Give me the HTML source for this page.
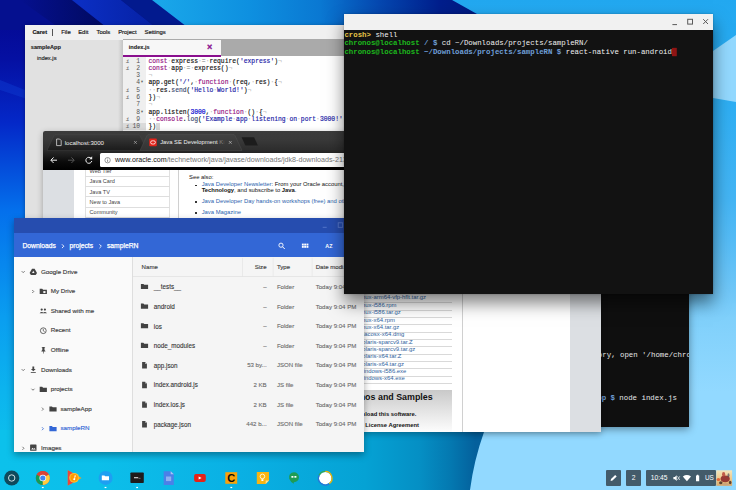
<!DOCTYPE html>
<html lang="en">
<head>
<meta charset="utf-8">
<title>Chrome OS desktop</title>
<style>
*{box-sizing:border-box;margin:0;padding:0}
html,body{width:736px;height:490px;overflow:hidden;background:#0a8fe0;font-family:"Liberation Sans",sans-serif;}
#desk{position:absolute;left:0;top:0;width:736px;height:490px;overflow:hidden}
.abs{position:absolute}
.win{position:absolute;overflow:hidden}
.t{position:absolute;white-space:pre;line-height:1}
/* ---------- Caret ---------- */
#caret{left:24.5px;top:24.5px;width:330px;height:200px;background:#fff;box-shadow:0 1px 4px rgba(0,0,0,.35)}
#caret .menu{position:absolute;left:0;top:0;width:100%;height:15px;background:#f1f1f1}
#caret .menu span{position:absolute;top:5.5px;font-size:5.9px;color:#1a1a1a;line-height:1;-webkit-text-stroke:0.18px #1a1a1a}
#caret .side{position:absolute;left:0;top:15.5px;width:98px;height:190px;background:linear-gradient(90deg,#e1e1e1 0,#e1e1e1 93px,#c4c4c4 98px)}
#caret .tabbar{position:absolute;left:98px;top:14.4px;width:240px;height:17.6px;background:#aaa}
#caret .tab{position:absolute;left:0;top:1.1px;width:98px;height:16.5px;background:#f7f7f7}
#caret .pline{position:absolute;left:98px;top:30.3px;width:98px;height:1.8px;background:#8a0f8e}
#caret .gutter{position:absolute;left:98px;top:32.1px;width:23px;height:170px;background:#efefef}
#caret .code{position:absolute;left:98px;top:33px;-webkit-text-stroke:0.15px;font-family:"Liberation Mono",monospace;font-size:6.35px;line-height:7.3px;color:#111}
#caret .code div{height:7.3px;position:relative}
#caret .ln{position:absolute;left:0;width:17.5px;text-align:right;color:#555;-webkit-text-stroke:0}
#caret .inf{position:absolute;left:3.5px;color:#777;font-style:italic;font-size:5.5px}
#caret .fold{position:absolute;left:18px;color:#555;font-size:5px}
#caret .src{position:absolute;left:26px;white-space:pre}
.o{color:#777}.k{color:#930f80}.s{color:#1a1aa6}.f{color:#3c4c72}.n{color:#0000cd}.i{color:#bfbfbf}.c{color:#930f80}
/* ---------- Terminal front ---------- */
#term{left:344px;top:14.2px;width:369.2px;height:279.8px;background:#121212;box-shadow:0 9px 16px rgba(0,0,0,.5),0 0 2px rgba(0,0,0,.25)}
#term .title{position:absolute;left:0;top:0;width:100%;height:16.2px;background:#f1f1f1}
.mono{font-family:"Liberation Mono",monospace;font-size:7.38px;line-height:8.6px;white-space:pre;color:#f0f0f0}
.g{color:#1cb81c;font-weight:bold}.y{color:#e8c547;font-weight:bold}.b{color:#6f9fd8;font-weight:bold}
/* ---------- Terminal back ---------- */
#term2{left:470px;top:250px;width:219px;height:176.5px;background:#0f0f0f;box-shadow:0 2px 8px rgba(0,0,0,.4)}
/* ---------- Chrome ---------- */
#chrome{left:43px;top:131px;width:557.5px;height:301px;background:#fff;border-radius:2px 2px 0 0;box-shadow:0 2px 6px rgba(0,0,0,.3)}
#chrome .frame{position:absolute;left:0;top:0;width:100%;height:19.5px;background:linear-gradient(#3c3c3c,#3a3a3a 40%,#2c2c2c)}
#chrome .tool{position:absolute;left:0;top:19.2px;width:100%;height:19.5px;background:linear-gradient(#2b2b2b,#0a0a0a 60%,#000)}
#chrome .omni{position:absolute;left:57.2px;top:22.2px;width:520px;height:14.3px;background:#fff;border-radius:1.5px}
#chrome .page{overflow:hidden;position:absolute;left:0;top:38.5px;width:557.5px;height:263px;background:#fff;font-size:5.85px;color:#111}
.lnk{color:#2b5fae}
/* ---------- Files ---------- */
#files{left:14.3px;top:217.7px;width:349.7px;height:234.5px;background:#f5f5f5;box-shadow:0 3px 7px rgba(0,0,0,.35)}
#files .tb{position:absolute;left:0;top:0;width:100%;height:16px;background:#264daf}
#files .bar{position:absolute;left:0;top:15.5px;width:100%;height:24.3px;background:#3367d6}
#files .side{position:absolute;left:0;top:39.8px;width:118.8px;height:195px;background:#fafafa;border-right:0.6px solid #dedede}
#files .t{font-size:6.45px;color:#444}
/* ---------- Shelf ---------- */
.tray{position:absolute;top:470.4px;height:15.3px;background:#435b6a;border-radius:1px}
</style>
</head>
<body>
<div id="desk">
<!--WALL-->
<svg class="abs" style="left:0;top:0" width="736" height="490" viewBox="0 0 736 490">
<defs>
<linearGradient id="gl" x1="0" y1="0" x2="0" y2="490" gradientUnits="userSpaceOnUse">
<stop offset="0" stop-color="#04068e"/><stop offset="0.12" stop-color="#0510a2"/><stop offset="0.25" stop-color="#0428c8"/><stop offset="0.43" stop-color="#0470ec"/><stop offset="0.65" stop-color="#0a9ef0"/><stop offset="0.8" stop-color="#0cb4ee"/><stop offset="0.9" stop-color="#0dbeec"/><stop offset="1" stop-color="#0cc1eb"/>
</linearGradient>
<linearGradient id="gt" x1="152" y1="0" x2="476" y2="0" gradientUnits="userSpaceOnUse">
<stop offset="0" stop-color="#1aa8ea"/><stop offset="0.3" stop-color="#0e90e0"/><stop offset="0.52" stop-color="#0a78d2"/><stop offset="0.7" stop-color="#0548b0"/><stop offset="0.89" stop-color="#001e8c"/><stop offset="1" stop-color="#001a80"/>
</linearGradient>
<linearGradient id="gb" x1="0" y1="0" x2="480" y2="0" gradientUnits="userSpaceOnUse">
<stop offset="0" stop-color="#0cc1eb"/><stop offset="0.2" stop-color="#0cbfea"/><stop offset="0.5" stop-color="#0ab0e4"/><stop offset="0.76" stop-color="#05a2d4"/><stop offset="0.875" stop-color="#058fc4"/><stop offset="0.94" stop-color="#0478b0"/><stop offset="0.99" stop-color="#04609c"/>
</linearGradient>
<linearGradient id="gr" x1="0" y1="0" x2="0" y2="490" gradientUnits="userSpaceOnUse">
<stop offset="0" stop-color="#22a8f0"/><stop offset="0.2" stop-color="#2daef3"/><stop offset="0.41" stop-color="#45b5f4"/><stop offset="0.49" stop-color="#55bcf6"/><stop offset="0.6" stop-color="#72c8f8"/><stop offset="0.65" stop-color="#80d0fb"/><stop offset="0.8" stop-color="#92d9ff"/><stop offset="1" stop-color="#92d9ff"/>
</linearGradient>
<linearGradient id="gn" x1="0" y1="0" x2="160" y2="0" gradientUnits="userSpaceOnUse">
<stop offset="0" stop-color="#04068e"/><stop offset="0.6" stop-color="#01066e"/><stop offset="1" stop-color="#000a5e"/>
</linearGradient>
<linearGradient id="gn2" x1="20" y1="0" x2="100" y2="0" gradientUnits="userSpaceOnUse"><stop offset="0" stop-color="#05108f"/><stop offset="1" stop-color="#010a62"/></linearGradient>
<linearGradient id="gn3" x1="80" y1="0" x2="150" y2="0" gradientUnits="userSpaceOnUse"><stop offset="0" stop-color="#0b2ec2"/><stop offset="1" stop-color="#0622a6"/></linearGradient>
</defs>
<rect width="736" height="490" fill="url(#gl)"/>
<polygon points="0,0 152,0 190,30 0,30" fill="#05108f"/>
<polygon points="20,0 72,0 110,30 62,30" fill="url(#gn2)"/>
<polygon points="72,0 121,0 159,30 110,30" fill="url(#gn3)"/>
<polygon points="121,0 152,0 190,30 159,30" fill="#021a8e"/>
<polygon points="0,80 30,92 30,100 0,90" fill="#0c36cc" opacity=".55"/>
<polygon points="152,0 452,0 477,14 477,40 204,40" fill="url(#gt)"/>
<rect x="0" y="430" width="490" height="60" fill="url(#gb)"/>
<path d="M452,0 L736,0 L736,490 L470,490 Q474,460 484,432 L477,14 Z" fill="url(#gr)"/>
<polygon points="690,67 736,35 736,102 690,94" fill="#93d9ff"/>
</svg>
<!--/WALL-->
<!--CARET-->
<div class="win" id="caret">
<div class="menu">
<span style="left:8px;font-weight:bold;color:#111;font-size:5.7px">Caret</span><i style="position:absolute;left:27px;top:4.2px;width:0.7px;height:7.2px;background:#555"></i>
<span style="left:36.7px">File</span><span style="left:53.7px">Edit</span><span style="left:72px">Tools</span><span style="left:93.7px">Project</span><span style="left:120px">Settings</span>
</div>
<div class="side">
<span class="t" style="left:6.3px;top:4.5px;font-size:5.6px;font-weight:bold;color:#1a1a1a;-webkit-text-stroke:0.1px">sampleApp</span>
<span class="t" style="left:12.4px;top:15.7px;font-size:5.8px;color:#222;-webkit-text-stroke:0.15px">index.js</span>
</div>
<div class="tabbar"><div class="tab"><span class="t" style="left:6.3px;top:5.1px;font-size:5.6px;font-weight:bold;color:#1a1a1a;-webkit-text-stroke:0.1px">index.js</span><span class="t" style="left:84.6px;top:2.7px;font-size:9px;font-weight:bold;color:#8a0f8e;-webkit-text-stroke:0.3px #8a0f8e">×</span></div></div>
<div class="pline"></div>
<div class="gutter"></div><div class="abs" style="left:98px;top:98.7px;width:23px;height:7.3px;background:#dadada"></div>
<div class="code">
<div><span class="inf">i</span><span class="ln">1</span><span class="src"><span class="k">const</span><span class="i">·</span>express<span class="i">·</span><span class="o">=</span><span class="i">·</span>require(<span class="s">'express'</span>)<span class="i">¬</span></span></div>
<div><span class="inf">i</span><span class="ln">2</span><span class="src"><span class="k">const</span><span class="i">·</span>app<span class="i">·</span><span class="o">=</span><span class="i">·</span>express()<span class="i">¬</span></span></div>
<div><span class="ln">3</span><span class="src"><span class="i">¬</span></span></div>
<div><span class="ln">4</span><span class="fold">▾</span><span class="src">app.get(<span class="s">'/'</span>,<span class="i">·</span><span class="k">function</span><span class="i">·</span>(req,<span class="i">·</span>res)<span class="i">·</span>{<span class="i">¬</span></span></div>
<div><span class="inf">i</span><span class="ln">5</span><span class="src"><span class="i">··</span>res.<span class="f">send</span>(<span class="s">'Hello<span class="i">·</span>World!'</span>)<span class="i">¬</span></span></div>
<div><span class="inf">i</span><span class="ln">6</span><span class="src">})<span class="i">¬</span></span></div>
<div><span class="ln">7</span><span class="src"><span class="i">¬</span></span></div>
<div><span class="ln">8</span><span class="fold">▾</span><span class="src">app.listen(<span class="n">3000</span>,<span class="i">·</span><span class="k">function</span><span class="i">·</span>()<span class="i">·</span>{<span class="i">¬</span></span></div>
<div><span class="inf">i</span><span class="ln">9</span><span class="src"><span class="i">··</span><span class="c">console</span>.<span class="f">log</span>(<span class="s">'Example<span class="i">·</span>app<span class="i">·</span>listening<span class="i">·</span>on<span class="i">·</span>port<span class="i">·</span>3000!'</span></span></div>
<div><span class="inf">i</span><span class="ln">10</span><span class="src">})<span style="background:#d8d8d8;color:#d8d8d8">|</span></span></div>
</div>
</div>
<!--/CARET-->
<!--TERM2-->
<div class="win" id="term2">
<div class="abs mono" style="left:30.500px;top:100.900px;color:#e8e8e8">no such file or directory, open '/home/chronos/user/Downloads/projects/sampleApp/package.json'</div>
<div class="abs mono" style="left:3.300px;top:143.900px;color:#e8e8e8"><span class="b">~/Downloads/projects/sampleApp $</span> node index.js</div>
</div>
<!--/TERM2-->
<!--CHROME-->
<div class="win" id="chrome">
<div class="frame"></div>
<div class="tool"></div>
<div class="omni"></div>
<svg class="abs" style="left:0;top:0" width="557.5" height="39" viewBox="0 0 557.5 39">
<defs><linearGradient id="tb1" x1="0" y1="0" x2="0" y2="1"><stop offset="0" stop-color="#3b3b3b"/><stop offset="1" stop-color="#1b1b1b"/></linearGradient>
<linearGradient id="tb2" x1="0" y1="0" x2="0" y2="1"><stop offset="0" stop-color="#424242"/><stop offset="1" stop-color="#333"/></linearGradient></defs>
<path d="M4,19.4 L11,4.6 Q11.6,3.4 13,3.4 L95,3.4 Q96.4,3.4 97,4.6 L104,19.4 Z" fill="url(#tb1)" stroke="#4a4a4a" stroke-width="0.4"/>
<path d="M97,19.4 L104,4.6 Q104.6,3.4 106,3.4 L190,3.4 Q191.4,3.4 192,4.6 L199,19.4 Z" fill="url(#tb2)" stroke="#555" stroke-width="0.4"/>
<path d="M198.6,6.3 h12.5 l3.8,8.2 h-12.500 z" fill="#1c1c1c"/>
<!-- page icon -->
<path d="M13.6,8 h3 l1.6,1.6 v5 h-4.6 z" fill="none" stroke="#eee" stroke-width="0.7"/>
<!-- close x tab1 -->
<path d="M91,10 l2.8,2.8 M93.800,10 l-2.8,2.800" stroke="#bbb" stroke-width="0.6"/>
<!-- oracle icon -->
<rect x="106.200" y="7.600" width="7.600" height="7.600" rx="0.800" fill="#e2231a"/><rect x="107.600" y="9.800" width="4.800" height="3.200" rx="1.600" fill="none" stroke="#fff" stroke-width="0.800"/>
<path d="M185.900,10 l2.800,2.800 M188.700,10 l-2.800,2.800" stroke="#ccc" stroke-width="0.600"/>
<!-- nav -->
<path d="M14,29.200 h-6 M10.600,26.400 l-2.800,2.800 l2.800,2.800" fill="none" stroke="#eee" stroke-width="1"/>
<path d="M25,29.200 h6 M28.400,26.400 l2.800,2.800 l-2.800,2.800" fill="none" stroke="#555" stroke-width="1"/>
<path d="M48.200,27.400 a3,3 0 1 0 0.600,2.600" fill="none" stroke="#eee" stroke-width="1"/><path d="M49.200,25.200 v3 h-3 z" fill="#eee"/>
</svg>
<span class="t" style="left:21.700px;top:8.500px;font-size:6.100px;color:#eee">localhost:3000</span>
<span class="t" style="left:117.200px;top:8.600px;font-size:5.820px;color:#eee">Java SE Development <span style="color:#888">K</span><span style="color:#555">i</span></span>
<svg class="abs" style="left:60px;top:24px" width="10" height="10" viewBox="0 0 10 10"><circle cx="4.600" cy="5.200" r="2.700" fill="none" stroke="#555" stroke-width="0.600"/><path d="M4.600,4.800 v2 M4.600,3.600 v0.700" stroke="#555" stroke-width="0.700"/></svg>
<span class="t" style="left:72px;top:25.700px;font-size:7.1px;color:#111">www.oracle.com<span style="color:#777;font-size:7.15px">/technetwork/java/javase/downloads/jdk8-downloads-2133151.html</span></span>
<div class="page">
<div class="abs" style="left:0;top:0;width:31px;height:263px;background:#dcdfe3"></div>
<div class="abs" style="left:527px;top:0;width:31px;height:263px;background:#dcdfe3"></div>
<div class="abs" style="left:42.2px;top:-4px;width:85px;height:52px;border-left:0.6px solid #e0e0e0;border-right:0.6px solid #e0e0e0"></div>
<span class="t" style="left:46.6px;top:-0.60px;font-size:5.55px;color:#444">Web Tier</span>
<div class="abs" style="left:42.2px;top:6.20px;width:85px;height:0.6px;background:#dedede"></div>
<span class="t" style="left:46.6px;top:9.73px;font-size:5.55px;color:#444">Java Card</span>
<div class="abs" style="left:42.2px;top:16.53px;width:85px;height:0.6px;background:#dedede"></div>
<span class="t" style="left:46.6px;top:20.06px;font-size:5.55px;color:#444">Java TV</span>
<div class="abs" style="left:42.2px;top:26.86px;width:85px;height:0.6px;background:#dedede"></div>
<span class="t" style="left:46.6px;top:30.39px;font-size:5.55px;color:#444">New to Java</span>
<div class="abs" style="left:42.2px;top:37.19px;width:85px;height:0.6px;background:#dedede"></div>
<span class="t" style="left:46.6px;top:40.72px;font-size:5.55px;color:#444">Community</span>
<div class="abs" style="left:42.2px;top:47.52px;width:85px;height:0.6px;background:#dedede"></div>
<div class="abs" style="left:135.4px;top:0;width:0.7px;height:52px;background:#d0d0d0"></div>
<span class="t" style="left:146px;top:5.00px;font-size:5.85px;color:#111">See also:</span>
<div class="abs" style="left:152.2px;top:15.10px;width:1.5px;height:1.5px;border-radius:50%;background:#111"></div>
<span class="t" style="left:158.7px;top:12.80px;font-size:5.85px;color:#111"><span class="lnk">Java Developer Newsletter</span>: From your Oracle account, select <b>Subscriptions</b>, expand</span>
<span class="t" style="left:158.7px;top:18.70px;font-size:5.85px;color:#111"><b>Technology</b>, and subscribe to <b>Java</b>.</span>
<div class="abs" style="left:152.2px;top:31.90px;width:1.5px;height:1.5px;border-radius:50%;background:#111"></div>
<span class="t" style="left:158.7px;top:29.60px;font-size:5.85px"><span class="lnk">Java Developer Day hands-on workshops (free) and other events</span></span>
<div class="abs" style="left:152.2px;top:42.60px;width:1.5px;height:1.5px;border-radius:50%;background:#111"></div>
<span class="t" style="left:158.7px;top:40.30px;font-size:5.85px"><span class="lnk">Java Magazine</span></span>
<span class="t" style="left:288.5px;top:125.95px;font-size:5.92px;color:#2f5f9e">jdk-8u121-linux-arm64-vfp-hflt.tar.gz</span>
<div class="abs" style="left:200px;top:132.70px;width:208.8px;height:0.6px;background:#d9d9d9"></div>
<span class="t" style="left:288.5px;top:133.30px;font-size:5.92px;color:#2f5f9e">jdk-8u121-linux-i586.rpm</span>
<div class="abs" style="left:200px;top:140.05px;width:208.8px;height:0.6px;background:#d9d9d9"></div>
<span class="t" style="left:288.5px;top:140.65px;font-size:5.92px;color:#2f5f9e">jdk-8u121-linux-i586.tar.gz</span>
<div class="abs" style="left:200px;top:147.40px;width:208.8px;height:0.6px;background:#d9d9d9"></div>
<span class="t" style="left:288.5px;top:148.00px;font-size:5.92px;color:#2f5f9e">jdk-8u121-linux-x64.rpm</span>
<div class="abs" style="left:200px;top:154.75px;width:208.8px;height:0.6px;background:#d9d9d9"></div>
<span class="t" style="left:288.5px;top:155.35px;font-size:5.92px;color:#2f5f9e">jdk-8u121-linux-x64.tar.gz</span>
<div class="abs" style="left:200px;top:162.10px;width:208.8px;height:0.6px;background:#d9d9d9"></div>
<span class="t" style="left:288.5px;top:162.70px;font-size:5.92px;color:#2f5f9e">jdk-8u121-macosx-x64.dmg</span>
<div class="abs" style="left:200px;top:169.45px;width:208.8px;height:0.6px;background:#d9d9d9"></div>
<span class="t" style="left:288.5px;top:170.05px;font-size:5.92px;color:#2f5f9e">jdk-8u121-solaris-sparcv9.tar.Z</span>
<div class="abs" style="left:200px;top:176.80px;width:208.8px;height:0.6px;background:#d9d9d9"></div>
<span class="t" style="left:288.5px;top:177.40px;font-size:5.92px;color:#2f5f9e">jdk-8u121-solaris-sparcv9.tar.gz</span>
<div class="abs" style="left:200px;top:184.15px;width:208.8px;height:0.6px;background:#d9d9d9"></div>
<span class="t" style="left:288.5px;top:184.75px;font-size:5.92px;color:#2f5f9e">jdk-8u121-solaris-x64.tar.Z</span>
<div class="abs" style="left:200px;top:191.50px;width:208.8px;height:0.6px;background:#d9d9d9"></div>
<span class="t" style="left:288.5px;top:192.10px;font-size:5.92px;color:#2f5f9e">jdk-8u121-solaris-x64.tar.gz</span>
<div class="abs" style="left:200px;top:198.85px;width:208.8px;height:0.6px;background:#d9d9d9"></div>
<span class="t" style="left:288.5px;top:199.45px;font-size:5.92px;color:#2f5f9e">jdk-8u121-windows-i586.exe</span>
<div class="abs" style="left:200px;top:206.20px;width:208.8px;height:0.6px;background:#d9d9d9"></div>
<span class="t" style="left:288.5px;top:206.80px;font-size:5.92px;color:#2f5f9e">jdk-8u121-windows-x64.exe</span>
<div class="abs" style="left:200px;top:213.55px;width:208.8px;height:0.6px;background:#d9d9d9"></div>
<div class="abs" style="left:419px;top:60px;width:0.7px;height:203px;background:#d0d0d0"></div>
<div class="abs" style="left:200px;top:220.5px;width:208.6px;height:42px;background:linear-gradient(#c9c9c9,#e4e4e4 50%,#fdfdfd)"></div>
<span class="t" style="right:167.8px;top:223.4px;font-size:8.9px;font-weight:bold;color:#111">Java SE Development Kit 8u121 Demos and Samples</span>
<span class="t" style="right:184px;top:242.8px;font-size:5.85px;font-weight:bold;color:#111">You must accept the Oracle BSD License. to download this software.</span>
<span class="t" style="right:181.5px;top:253.0px;font-size:5.85px;font-weight:bold;color:#111">Accept License Agreement</span>
</div>
</div>
<!--/CHROME-->
<!--FILES-->
<div class="win" id="files">
<div class="tb"></div><div class="bar"></div><div class="side"></div>
<span class="t" style="left:8.20px;top:25.10px;font-size:6.75px;color:#fff;-webkit-text-stroke:0.25px #fff">Downloads</span>
<span class="t" style="left:55.20px;top:25.10px;font-size:6.75px;color:#fff;-webkit-text-stroke:0.25px #fff">projects</span>
<span class="t" style="left:92.70px;top:25.10px;font-size:6.75px;color:#fff;-webkit-text-stroke:0.25px #fff">sampleRN</span>
<svg class="abs" style="left:0;top:0" width="349.7" height="234.5" viewBox="14.30 217.70 349.7 234.5">
<path d="M62.25,244.00 l1.90,1.90 l-1.90,1.90" fill="none" stroke="#fff" stroke-width="0.90"/>
<path d="M99.75,244.00 l1.90,1.90 l-1.90,1.90" fill="none" stroke="#fff" stroke-width="0.90"/>
<circle cx="281.3" cy="244.9" r="2.1" fill="none" stroke="#fff" stroke-width="0.9"/><path d="M282.9,246.5 l2.2,2.2" stroke="#fff" stroke-width="1"/>
<rect x="302.20" y="243.30" width="1.9" height="1.9" fill="#fff"/>
<rect x="302.20" y="245.60" width="1.9" height="1.9" fill="#fff"/>
<rect x="304.50" y="243.30" width="1.9" height="1.9" fill="#fff"/>
<rect x="304.50" y="245.60" width="1.9" height="1.9" fill="#fff"/>
<rect x="306.80" y="243.30" width="1.9" height="1.9" fill="#fff"/>
<rect x="306.80" y="245.60" width="1.9" height="1.9" fill="#fff"/>
<text x="325.6" y="247.6" font-family="Liberation Sans, sans-serif" font-size="5.4" font-weight="bold" fill="#fff">AZ</text>
<path d="M323,227 h4" stroke="#5f7fd0" stroke-width="0.8"/><rect x="338.5" y="222.5" width="4.5" height="4.5" fill="none" stroke="#5f7fd0" stroke-width="0.8"/>
<path d="M22.00,270.85 l1.50,1.50 l1.50,-1.50" fill="none" stroke="#555" stroke-width="0.80"/>
<path d="M32.3,268.4 h2.6 l2.4,4.2 l-1.3,2.2 h-4.800 l-1.300,-2.200 z" fill="#444"/><path d="M33.600,270.500 l1.200,2.100 h-2.400 z" fill="#fafafa"/>
<path d="M32.55,289.70 l1.50,1.50 l-1.50,1.50" fill="none" stroke="#555" stroke-width="0.80"/>
<path d="M40.00,288.50 h2.5 l0.9,0.9 h3.8 v4.3 h-7.2 z" fill="#424242"/>
<rect x="43.6" y="290.80" width="2.2" height="2" fill="#fafafa"/>
<circle cx="42" cy="309.30" r="1.1" fill="#444"/><circle cx="45.2" cy="309.30" r="1.1" fill="#444"/><path d="M39.9,313.00 q2.100,-2.600 4.200,0 z M43.200,313.00 q2,-2.600 4.100,0 z" fill="#444"/>
<circle cx="43.6" cy="330.40" r="2.900" fill="none" stroke="#444" stroke-width="0.800"/><path d="M43.600,328.60 v2 l1.400,0.900" fill="none" stroke="#444" stroke-width="0.700"/>
<path d="M42,346.60 h3.400 v0.700 h-0.600 v2.400 l0.900,0.900 v0.500 h-1.700 v2 h-0.600 v-2 h-1.700 v-0.500 l0.900,-0.900 v-2.400 h-0.600 z" fill="#444"/>
<path d="M22.00,368.85 l1.50,1.50 l1.50,-1.50" fill="none" stroke="#555" stroke-width="0.80"/>
<path d="M32.700,366.20 h1.800 v2.400 h1.500 l-2.400,2.400 l-2.400,-2.400 h1.500 z" fill="#444"/><rect x="31.100" y="371.80" width="5" height="0.800" fill="#444"/>
<path d="M31.80,388.45 l1.50,1.50 l1.50,-1.50" fill="none" stroke="#555" stroke-width="0.80"/>
<path d="M40.00,386.50 h2.5 l0.9,0.9 h3.8 v4.3 h-7.2 z" fill="#424242"/>
<path d="M42.25,407.30 l1.50,1.50 l-1.50,1.50" fill="none" stroke="#555" stroke-width="0.80"/>
<path d="M49.70,406.10 h2.5 l0.9,0.9 h3.8 v4.3 h-7.2 z" fill="#424242"/>
<path d="M42.25,426.90 l1.50,1.50 l-1.50,1.50" fill="none" stroke="#3367d6" stroke-width="0.80"/>
<path d="M49.70,425.70 h2.5 l0.9,0.9 h3.8 v4.3 h-7.2 z" fill="#3367d6"/>
<path d="M22.75,446.50 l1.50,1.50 l-1.50,1.50" fill="none" stroke="#555" stroke-width="0.80"/>
<rect x="30.400" y="444.10" width="6.400" height="6.400" rx="0.600" fill="#444"/><path d="M31.400,449.30 l1.500,-1.900 l1.100,1.300 l0.800,-0.900 l1.200,1.500 z" fill="#fafafa"/>
<path d="M141.20,283.60 h2.5 l0.9,0.9 h3.8 v4.3 h-7.2 z" fill="#424242"/>
<path d="M141.20,303.23 h2.5 l0.9,0.9 h3.8 v4.3 h-7.2 z" fill="#424242"/>
<path d="M141.20,322.86 h2.5 l0.9,0.9 h3.8 v4.3 h-7.2 z" fill="#424242"/>
<path d="M141.20,342.49 h2.5 l0.9,0.9 h3.8 v4.3 h-7.2 z" fill="#424242"/>
<path d="M142.400,361.82 h3 l1.800,1.800 v4.600 h-4.800 z" fill="#444"/><path d="M145.400,361.82 v1.800 h1.800 z" fill="#bbb"/>
<path d="M142.400,381.45 h3 l1.800,1.800 v4.600 h-4.800 z" fill="#444"/><path d="M145.400,381.45 v1.800 h1.800 z" fill="#bbb"/>
<path d="M142.400,401.08 h3 l1.800,1.800 v4.600 h-4.800 z" fill="#444"/><path d="M145.400,401.08 v1.800 h1.800 z" fill="#bbb"/>
<path d="M142.400,420.71 h3 l1.800,1.800 v4.600 h-4.800 z" fill="#444"/><path d="M145.400,420.71 v1.800 h1.800 z" fill="#bbb"/>
<rect x="242.50" y="257.500" width="0.600" height="18.500" fill="#e2e2e2"/>
<rect x="273.10" y="257.500" width="0.600" height="18.500" fill="#e2e2e2"/>
<rect x="312.10" y="257.500" width="0.600" height="18.500" fill="#e2e2e2"/>
<rect x="132.300" y="275.900" width="232" height="0.600" fill="#dcdcdc"/>
</svg>
<span class="t" style="left:26.70px;top:50.98px;font-size:6.25px;color:#404040;-webkit-text-stroke:0.15px #404040">Google Drive</span>
<span class="t" style="left:36.40px;top:70.58px;font-size:6.25px;color:#404040;-webkit-text-stroke:0.15px #404040">My Drive</span>
<span class="t" style="left:36.40px;top:90.18px;font-size:6.25px;color:#404040;-webkit-text-stroke:0.15px #404040">Shared with me</span>
<span class="t" style="left:36.40px;top:109.78px;font-size:6.25px;color:#404040;-webkit-text-stroke:0.15px #404040">Recent</span>
<span class="t" style="left:36.40px;top:129.38px;font-size:6.25px;color:#404040;-webkit-text-stroke:0.15px #404040">Offline</span>
<span class="t" style="left:26.70px;top:148.98px;font-size:6.25px;color:#404040;-webkit-text-stroke:0.15px #404040">Downloads</span>
<span class="t" style="left:36.40px;top:168.58px;font-size:6.25px;color:#404040;-webkit-text-stroke:0.15px #404040">projects</span>
<span class="t" style="left:46.10px;top:188.18px;font-size:6.25px;color:#404040;-webkit-text-stroke:0.15px #404040">sampleApp</span>
<span class="t" style="left:46.10px;top:207.78px;font-size:6.25px;color:#3367d6;-webkit-text-stroke:0.15px #3367d6">sampleRN</span>
<span class="t" style="left:26.70px;top:227.38px;font-size:6.25px;color:#404040;-webkit-text-stroke:0.15px #404040">Images</span>
<span class="t" style="left:127.30px;top:46.05px;font-size:6.10px;color:#444;-webkit-text-stroke:0.15px #444">Name</span>
<span class="t" style="left:240.40px;top:46.05px;font-size:6.10px;color:#444;-webkit-text-stroke:0.15px #444">Size</span>
<span class="t" style="left:262.60px;top:46.05px;font-size:6.10px;color:#444;-webkit-text-stroke:0.15px #444">Type</span>
<span class="t" style="left:301.40px;top:46.05px;font-size:6.10px;color:#444;-webkit-text-stroke:0.15px #444">Date modi...</span>
<span class="t" style="left:139.50px;top:66.65px;font-size:6.30px;color:#333;-webkit-text-stroke:0.1px #333">__tests__</span>
<span class="t" style="right:97.30px;top:66.25px;font-size:6.1px;color:#6a6a6a;-webkit-text-stroke:0.1px #6a6a6a">–</span>
<span class="t" style="left:262.60px;top:66.25px;font-size:6.10px;color:#6a6a6a;-webkit-text-stroke:0.1px #6a6a6a">Folder</span>
<span class="t" style="left:301.40px;top:66.25px;font-size:6.10px;color:#6a6a6a;-webkit-text-stroke:0.1px #6a6a6a">Today 9:04 PM</span>
<span class="t" style="left:139.50px;top:86.28px;font-size:6.30px;color:#333;-webkit-text-stroke:0.1px #333">android</span>
<span class="t" style="right:97.30px;top:85.88px;font-size:6.1px;color:#6a6a6a;-webkit-text-stroke:0.1px #6a6a6a">–</span>
<span class="t" style="left:262.60px;top:85.88px;font-size:6.10px;color:#6a6a6a;-webkit-text-stroke:0.1px #6a6a6a">Folder</span>
<span class="t" style="left:301.40px;top:85.88px;font-size:6.10px;color:#6a6a6a;-webkit-text-stroke:0.1px #6a6a6a">Today 9:04 PM</span>
<span class="t" style="left:139.50px;top:105.91px;font-size:6.30px;color:#333;-webkit-text-stroke:0.1px #333">ios</span>
<span class="t" style="right:97.30px;top:105.51px;font-size:6.1px;color:#6a6a6a;-webkit-text-stroke:0.1px #6a6a6a">–</span>
<span class="t" style="left:262.60px;top:105.51px;font-size:6.10px;color:#6a6a6a;-webkit-text-stroke:0.1px #6a6a6a">Folder</span>
<span class="t" style="left:301.40px;top:105.51px;font-size:6.10px;color:#6a6a6a;-webkit-text-stroke:0.1px #6a6a6a">Today 9:04 PM</span>
<span class="t" style="left:139.50px;top:125.54px;font-size:6.30px;color:#333;-webkit-text-stroke:0.1px #333">node_modules</span>
<span class="t" style="right:97.30px;top:125.14px;font-size:6.1px;color:#6a6a6a;-webkit-text-stroke:0.1px #6a6a6a">–</span>
<span class="t" style="left:262.60px;top:125.14px;font-size:6.10px;color:#6a6a6a;-webkit-text-stroke:0.1px #6a6a6a">Folder</span>
<span class="t" style="left:301.40px;top:125.14px;font-size:6.10px;color:#6a6a6a;-webkit-text-stroke:0.1px #6a6a6a">Today 9:04 PM</span>
<span class="t" style="left:139.50px;top:145.17px;font-size:6.30px;color:#333;-webkit-text-stroke:0.1px #333">app.json</span>
<span class="t" style="right:97.30px;top:144.77px;font-size:6.1px;color:#6a6a6a;-webkit-text-stroke:0.1px #6a6a6a">53 by...</span>
<span class="t" style="left:262.60px;top:144.77px;font-size:6.10px;color:#6a6a6a;-webkit-text-stroke:0.1px #6a6a6a">JSON file</span>
<span class="t" style="left:301.40px;top:144.77px;font-size:6.10px;color:#6a6a6a;-webkit-text-stroke:0.1px #6a6a6a">Today 9:04 PM</span>
<span class="t" style="left:139.50px;top:164.80px;font-size:6.30px;color:#333;-webkit-text-stroke:0.1px #333">index.android.js</span>
<span class="t" style="right:97.30px;top:164.40px;font-size:6.1px;color:#6a6a6a;-webkit-text-stroke:0.1px #6a6a6a">2 KB</span>
<span class="t" style="left:262.60px;top:164.40px;font-size:6.10px;color:#6a6a6a;-webkit-text-stroke:0.1px #6a6a6a">JS file</span>
<span class="t" style="left:301.40px;top:164.40px;font-size:6.10px;color:#6a6a6a;-webkit-text-stroke:0.1px #6a6a6a">Today 9:04 PM</span>
<span class="t" style="left:139.50px;top:184.43px;font-size:6.30px;color:#333;-webkit-text-stroke:0.1px #333">index.ios.js</span>
<span class="t" style="right:97.30px;top:184.03px;font-size:6.1px;color:#6a6a6a;-webkit-text-stroke:0.1px #6a6a6a">2 KB</span>
<span class="t" style="left:262.60px;top:184.03px;font-size:6.10px;color:#6a6a6a;-webkit-text-stroke:0.1px #6a6a6a">JS file</span>
<span class="t" style="left:301.40px;top:184.03px;font-size:6.10px;color:#6a6a6a;-webkit-text-stroke:0.1px #6a6a6a">Today 9:04 PM</span>
<span class="t" style="left:139.50px;top:204.06px;font-size:6.30px;color:#333;-webkit-text-stroke:0.1px #333">package.json</span>
<span class="t" style="right:97.30px;top:203.66px;font-size:6.1px;color:#6a6a6a;-webkit-text-stroke:0.1px #6a6a6a">442 b...</span>
<span class="t" style="left:262.60px;top:203.66px;font-size:6.10px;color:#6a6a6a;-webkit-text-stroke:0.1px #6a6a6a">JSON file</span>
<span class="t" style="left:301.40px;top:203.66px;font-size:6.10px;color:#6a6a6a;-webkit-text-stroke:0.1px #6a6a6a">Today 9:04 PM</span>
</div>
<!--/FILES-->
<!--TERM-->
<div class="win" id="term">
<div class="title"></div>
<svg class="abs" style="left:320px;top:0" width="50" height="16" viewBox="320 0 50 16">
<path d="M328.400,10.600 h4.600" stroke="#5a5a5a" stroke-width="1"/>
<rect x="343.700" y="5.300" width="4.800" height="4.800" fill="none" stroke="#5a5a5a" stroke-width="1"/>
<path d="M359.200,5.200 l4.800,4.800 M364,5.200 l-4.800,4.800" stroke="#5a5a5a" stroke-width="1"/>
</svg>
<div class="abs mono" style="left:0.400px;top:16.700px"><span class="y">crosh&gt;</span> shell
<span class="g">chronos@localhost</span> <span class="b">/ $</span> cd ~/Downloads/projects/sampleRN/
<span class="g">chronos@localhost</span> <span class="b">~/Downloads/projects/sampleRN $</span> react-native run-android<span style="background:#8f1414;color:#8f1414">█</span></div>
</div>
<!--/TERM-->
<!--SHELF-->
<svg class="abs" style="left:0;top:462px" width="736" height="28" viewBox="0 462 736 28">
<!-- launcher -->
<circle cx="11.7" cy="478" r="7.6" fill="#0f4a5c"/><circle cx="11.7" cy="478" r="3.2" fill="none" stroke="#e8f0f2" stroke-width="0.9"/>
<!-- chrome -->
<g transform="translate(42.8 478)">
<circle r="7" fill="#db4437"/>
<path d="M0,0 L-6.06,-3.5 A7,7 0 0 0 0.0,7 Z" fill="#0f9d58"/>
<path d="M0,0 L0,7 A7,7 0 0 0 6.06,-3.5 L0,-3.5Z" fill="#ffcd40"/>
<path d="M0,0 L-6.06,-3.5 A7,7 0 0 1 6.06,-3.5 Z" fill="#db4437"/>
<circle r="3.3" fill="#fff"/><circle r="2.6" fill="#4285f4"/>
</g>
<!-- play music -->
<path d="M67.800,470.200 L81.600,478 L67.800,485.600 Z" fill="#f6a21e"/><path d="M67.800,470.200 L76,474.800 L76,481.100 L67.800,485.600 Z" fill="#e8453c"/>
<circle cx="74.100" cy="477.800" r="4.900" fill="#fdc02f"/><circle cx="74.100" cy="477.800" r="3.700" fill="#ff9800"/>
<path d="M74.500,475.600 h1.600 v0.900 h-0.900 v2.700 a1,1 0 1 1 -0.700,-0.900 z" fill="#fff"/>
<!-- files -->
<circle cx="105.6" cy="477.9" r="7" fill="#1e9ff2"/>
<path d="M101.8,475.4 h2.6 l0.8,0.8 h3.8 v4.1 h-7.2 z" fill="#fff"/>
<!-- terminal -->
<rect x="130.4" y="472.4" width="13.4" height="10.6" rx="0.8" fill="#1f1b1b"/>
<rect x="134" y="477" width="4.2" height="1.3" fill="#ddd" opacity=".85"/><rect x="138.5" y="477.9" width="2" height="0.6" fill="#aaa"/>
<!-- docs -->
<path d="M163.7,471.2 h7 l3.1,3.1 v10.8 h-10.1 z" fill="#4a80e8"/><path d="M170.7,471.2 l3.1,3.1 h-3.1 z" fill="#a9c4f5"/>
<rect x="166" y="476.5" width="5.2" height="4.6" fill="#9dbcf3" opacity=".8"/>
<!-- youtube -->
<rect x="194.1" y="474.1" width="11.7" height="7.8" rx="1.8" fill="#e62117"/><path d="M198.6,476.4 L201.6,478 L198.6,479.6 Z" fill="#fff"/>
<!-- caret -->
<rect x="225.3" y="472.2" width="11.9" height="11.6" fill="#f9a20b"/>
<text x="231.3" y="482" font-family="Liberation Sans, sans-serif" font-weight="bold" font-size="11" text-anchor="middle" fill="#0a0a0a">C</text>
<!-- keep -->
<path d="M256.8,472 h12.2 v8.6 l-3.3,3.3 h-8.9 z" fill="#f7b512"/><path d="M269,480.6 l-3.3,3.3 v-3.3 z" fill="#fde293"/>
<circle cx="262.4" cy="476.4" r="2.3" fill="none" stroke="#fff" stroke-width="0.8"/><rect x="261.4" y="479.2" width="2" height="1.8" fill="#fff"/>
<!-- hangouts -->
<path d="M294,472.2 a5,5 0 0 1 0,10 h-0.2 v1.6 q-3,-1.2 -4.6,-5 a5,5 0 0 1 4.8,-6.6 z" fill="#1e9c55"/>
<rect x="291.4" y="476" width="2" height="1.7" fill="#fff"/><rect x="294.4" y="476" width="2" height="1.7" fill="#fff"/>
<!-- circle -->
<circle cx="325.2" cy="478.2" r="6.2" fill="#fff"/>
<path d="M325.2,471.4 a6.8,6.8 0 0 1 4,12.3" fill="none" stroke="#f4b400" stroke-width="1.3"/>
<path d="M329.2,483.7 a6.8,6.8 0 0 1 -10,-8.6" fill="none" stroke="#2a74d8" stroke-width="1.3"/>
<path d="M319.2,475.1 a6.8,6.8 0 0 1 6,-3.7" fill="none" stroke="#34a853" stroke-width="1.3"/>
<!-- running dots -->
<rect x="41.9" y="486.9" width="1.8" height="1.2" fill="#fff"/><rect x="104.6" y="486.9" width="1.8" height="1.2" fill="#fff"/><rect x="136.2" y="486.9" width="1.8" height="1.2" fill="#fff"/><rect x="230.4" y="486.9" width="1.8" height="1.2" fill="#fff"/>
</svg>
<div class="tray" style="left:605.8px;width:15.2px"></div>
<div class="tray" style="left:626.1px;width:15px"></div>
<div class="tray" style="left:646.1px;width:70.4px"></div>
<svg class="abs" style="left:600px;top:466px" width="136" height="24" viewBox="600 466 136 24">
<path d="M610.6,481 l0.4,-1.9 l4.2,-4.2 l1.5,1.5 l-4.2,4.2 z" fill="#fff"/>
<text x="633.6" y="480.4" font-family="Liberation Sans, sans-serif" font-size="6.7" text-anchor="middle" fill="#fff">2</text>
<text x="650.8" y="480.4" font-family="Liberation Sans, sans-serif" font-size="6.7" fill="#fff">10:45</text>
<path d="M673.4,477 h1.5 l1.8,-1.7 v5.6 l-1.8,-1.7 h-1.5 z" fill="#fff"/><path d="M677.4,476.2 l2.4,3.8 M679.8,476.2 l-2.4,3.8" stroke="#fff" stroke-width="0.6"/>
<path d="M682.8,476.4 q4.1,-2.6 8.2,0 l-4.1,4.8 z" fill="#fff"/>
<path d="M696,475.5 h0.9 v-0.7 h1.4 v0.7 h0.9 v5.7 h-3.2 z" fill="#fff"/>
<text x="705" y="480.4" font-family="Liberation Sans, sans-serif" font-size="6.4" fill="#fff">US</text>
<defs><linearGradient id="av" x1="0" y1="0" x2="0" y2="1"><stop offset="0" stop-color="#f4e6bd"/><stop offset="0.55" stop-color="#efc98a"/><stop offset="1" stop-color="#d9a86a"/></linearGradient></defs>
<rect x="716.3" y="470.3" width="15.8" height="15.5" fill="url(#av)"/>
<ellipse cx="725.2" cy="478.8" rx="4.600" ry="3.400" fill="#8e2b2b" opacity=".9"/><ellipse cx="723.6" cy="474.300" rx="1.600" ry="2.400" fill="#b8483a" opacity=".85"/>
<ellipse cx="728.5" cy="475.200" rx="1" ry="2" fill="#4a4a5a" opacity=".7"/><ellipse cx="718.4" cy="479.500" rx="1.800" ry="1.500" fill="#e0572a" opacity=".85"/>
<ellipse cx="720.8" cy="482.700" rx="1.700" ry="1.500" fill="#3a2420" opacity=".8"/><ellipse cx="730.200" cy="482.500" rx="1.300" ry="1.800" fill="#3a2420" opacity=".8"/>
<ellipse cx="725.500" cy="484.300" rx="3.500" ry="1.200" fill="#c9a27a" opacity=".9"/>
</svg>
<!--/SHELF-->
</div>
</body>
</html>
